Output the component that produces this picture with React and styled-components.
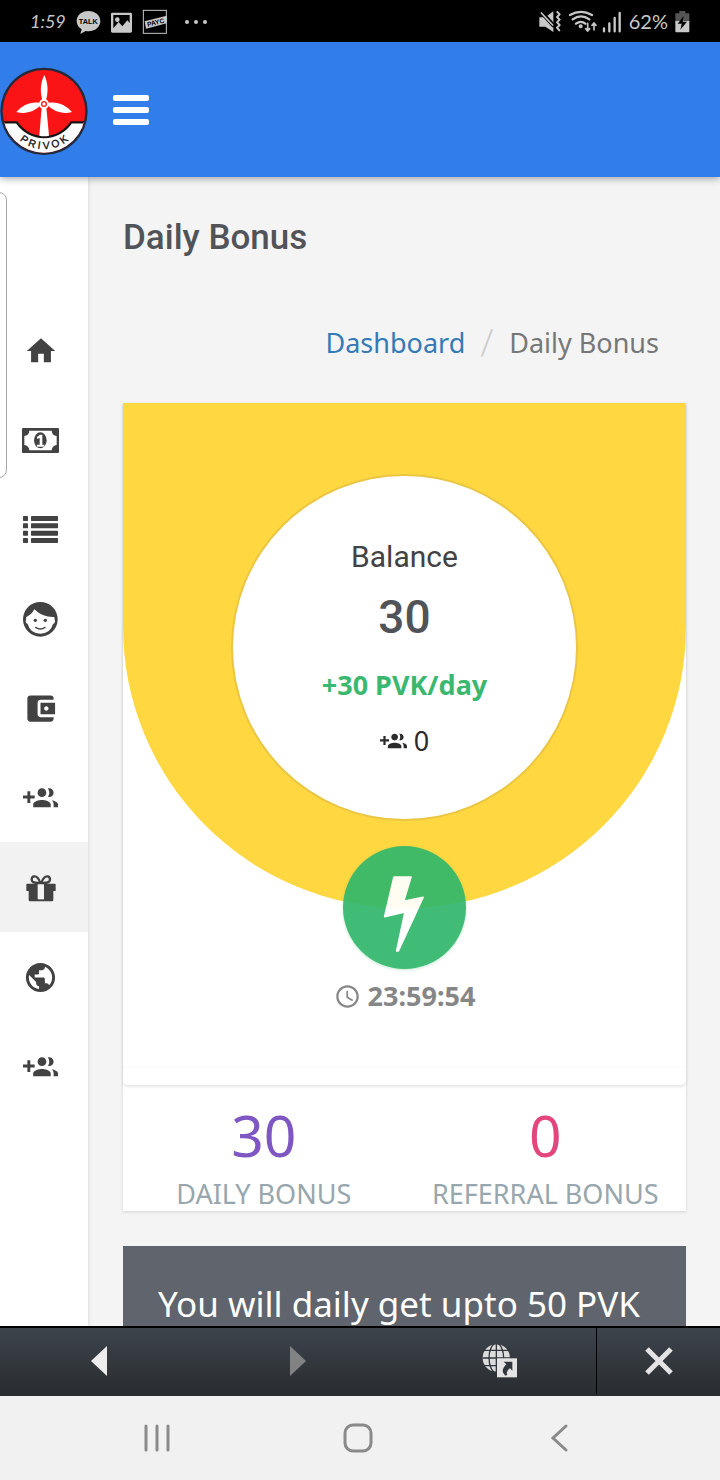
import styled, { createGlobalStyle } from "styled-components";
import { MdHome, MdPublic, MdAccessTime } from "react-icons/md";

const GlobalStyle = createGlobalStyle`
  * {
    box-sizing: border-box;
    margin: 0;
    padding: 0;
  }
  body {
    background: #f4f4f4;
    color: #424242;
    font-family: "Noto Sans", sans-serif;
    font-size: 27px;
  }
  a {
    text-decoration: none;
  }
  button {
    background: none;
    border: none;
    cursor: pointer;
    font: inherit;
  }
  svg {
    display: block;
  }
`;

const Screen = styled.div`
  display: flex;
  flex-direction: column;
  height: 100vh;
  overflow: hidden;
`;

const StatusBar = styled.div`
  display: flex;
  flex: none;
  align-items: center;
  justify-content: space-between;
  height: 42px;
  padding: 0 30px;
  background: #000;
  color: #c8c8c8;
  font-family: Lato, sans-serif;
  font-size: 20px;
`;

const StatusGroup = styled.div`
  display: flex;
  align-items: center;
  gap: ${({ $gap }) => $gap}px;
  em {
    width: 36px;
    font-size: 18px;
  }
`;

const Header = styled.header`
  display: flex;
  flex: none;
  align-items: center;
  gap: 25px;
  height: 135px;
  background: #317eeb;
  box-shadow: 0 1px 8px rgba(0, 0, 0, 0.4);
  position: relative;
  z-index: 2;
`;

const MenuButton = styled.button`
  display: flex;
  flex-direction: column;
  gap: 6px;
  width: 36px;
  span {
    height: 6px;
    border-radius: 2px;
    background: #fff;
  }
`;

const Body = styled.div`
  display: flex;
  flex: 1;
  min-height: 0;
  overflow: hidden;
  position: relative;
`;

const ScrollHandle = styled.div`
  position: absolute;
  top: 15px;
  left: -10px;
  width: 17px;
  height: 286px;
  border: 1px solid #a8a8a8;
  border-radius: 8px;
`;

const Sidebar = styled.nav`
  flex: none;
  width: 88px;
  padding-top: 128px;
  background: #fff;
  box-shadow: 0 0 4px rgba(0, 0, 0, 0.15);
  ul {
    display: grid;
    grid-auto-rows: 1fr;
    height: 806px;
    list-style: none;
  }
`;

const SideLink = styled.a`
  display: flex;
  align-items: center;
  justify-content: center;
  height: 100%;
  padding: 2px 7px 0 0;
  color: #424242;
  background: ${({ $active }) => ($active ? "#f2f2f2" : "transparent")};
`;

const Content = styled.main`
  flex: 1;
  min-width: 0;
  padding: 41px 34px 0 35px;
`;

const Title = styled.h1`
  color: #505458;
  font-family: Roboto, sans-serif;
  font-size: 35px;
  font-weight: 500;
  line-height: 40px;
`;

const Breadcrumb = styled.ol`
  display: flex;
  justify-content: flex-end;
  gap: 15px;
  margin-top: 65px;
  padding-right: 27px;
  line-height: 40px;
  color: #777;
  list-style: none;
  a {
    color: #337ab7;
  }
  li {
    display: flex;
  }
  li + li::before {
    content: "/";
    padding-right: 15px;
    color: #ccc;
    font-family: Roboto, sans-serif;
    font-size: 35px;
    font-weight: 300;
  }
`;

const Card = styled.section`
  margin-top: 40px;
  background: #fff;
  box-shadow: 0 1px 3px rgba(0, 0, 0, 0.14);
`;

const Panel = styled.div`
  display: flex;
  flex-direction: column;
  align-items: center;
  border-radius: 0 0 5px 5px;
  background: #fff;
  box-shadow: 0 2px 3px rgba(0, 0, 0, 0.1);
`;

const Hero = styled.div`
  display: flex;
  justify-content: center;
  width: 100%;
  padding: 73px 0 89px;
  border-radius: 0 0 282px 282px;
  background: #ffd740;
`;

const Circle = styled.div`
  display: flex;
  flex-direction: column;
  align-items: center;
  width: 343px;
  height: 343px;
  padding-top: 61px;
  border-radius: 50%;
  background: #fff;
  box-shadow: 0 0 0 2px rgba(80, 80, 80, 0.12);
  line-height: 40px;
`;

const BalanceLabel = styled.h2`
  font-family: Roboto, sans-serif;
  font-size: 30px;
  font-weight: 400;
`;

const Balance = styled.strong`
  margin-top: 10px;
  color: #505458;
  font-family: Roboto, sans-serif;
  font-size: 46px;
  font-weight: 500;
  line-height: 60px;
`;

const Rate = styled.strong`
  margin-top: 18px;
  color: #3bb86f;
`;

const Referrals = styled.span`
  display: flex;
  align-items: center;
  gap: 7px;
  margin-top: 16px;
  color: #2b2b2b;
`;

const ClaimButton = styled.button`
  width: 123px;
  height: 123px;
  margin-top: -62px;
  border-radius: 50%;
  background: #33b86c;
  box-shadow: 0 1px 3px rgba(51, 184, 108, 0.3);
  opacity: 0.93;
`;

const Timer = styled.div`
  display: flex;
  align-items: center;
  gap: 7px;
  margin: 7px 0 51px;
  color: #868686;
  font-weight: 700;
  line-height: 40px;
`;

const PanelFooter = styled.div`
  width: 100%;
  height: 18px;
  border-top: 1px solid #fafafa;
`;

const Stats = styled.dl`
  display: grid;
  grid-template-columns: 1fr 1fr;
  padding-top: 20px;
  text-align: center;
`;

const Stat = styled.div`
  display: flex;
  flex-direction: column-reverse;
  gap: 12px;
  dt {
    color: #98a6ad;
    line-height: 34px;
    text-transform: uppercase;
    white-space: nowrap;
  }
  dd {
    color: ${({ $color }) => $color};
    font-size: 57px;
    line-height: 60px;
  }
`;

const Notice = styled.section`
  margin-top: 35px;
  padding: 35px;
  background: #60646d;
  color: #fff;
  font-size: 35px;
  line-height: 46px;
`;

const BrowserBar = styled.div`
  display: grid;
  flex: none;
  grid-template-columns: 1fr 1fr 1fr 124px;
  height: 70px;
  padding-bottom: 2px;
  border-top: 2px solid #000;
  background: linear-gradient(#3d444c, #292c2f);
  button {
    display: flex;
    align-items: center;
    justify-content: center;
  }
  button:last-child {
    border-left: 1px solid #000;
  }
`;

const SystemBar = styled.div`
  display: grid;
  flex: none;
  grid-template-columns: 1fr 1fr 1fr;
  height: 84px;
  padding: 0 60px 0 56px;
  background: #f1f1f1;
  button {
    display: flex;
    align-items: center;
    justify-content: center;
  }
`;

const StatusNotifications = () => (
  <svg width="132" height="26" viewBox="228 24 396 78" fill="#c8c8c8">
    <path d="M265 33c-20 0-35 13-35 30 0 11 6 20 15 25l-4 14 16-9c28 4 44-12 44-30 0-17-16-30-36-30z" />
    <text x="265" y="72" fontSize="22" fontWeight="700" textAnchor="middle" fill="#000" fontFamily="Liberation Sans, sans-serif">TALK</text>
    <path fillRule="evenodd" d="M337 38h55q4 0 4 4v52q0 4-4 4h-55q-4 0-4-4V42q0-4 4-4zm3 7v40l16-19 11 13 15-18 7 8V45zm12 7a7 7 0 1 1 0 14 7 7 0 0 1 0-14z" />
    <rect x="430" y="31" width="69" height="69" fill="none" stroke="#c8c8c8" strokeWidth="3" />
    <path d="M434 64l66-17v23l-62 16z" />
    <text x="443" y="80" fontSize="20" fontWeight="700" fill="#000" fontFamily="Liberation Sans, sans-serif" transform="rotate(-13 443 80)">PAYC</text>
    <circle cx="561" cy="66" r="6" />
    <circle cx="588" cy="66" r="6" />
    <circle cx="615" cy="66" r="6" />
  </svg>
);

const StatusSignals = () => (
  <svg width="84" height="26" viewBox="54 24 252 78" fill="none" stroke="#c8c8c8" strokeWidth="6" strokeLinecap="round">
    <path d="M58 52h18l24-18v62L76 80H58z" fill="#c8c8c8" stroke="none" />
    <path d="M62 34l38 42" stroke="#000" strokeWidth="12" />
    <path d="M64 39l34 36" strokeWidth="5" />
    <path d="M112 36l7 7-8 8 8 8-8 8 8 8-8 8 7 8" strokeLinejoin="round" />
    <path d="M150 45q33-19 66 0M158 58q25-18 50 0M168 71q15-11 28 0" strokeWidth="7" />
    <circle cx="182" cy="79" r="3" fill="#c8c8c8" />
    <path d="M203 70v22m-6-6l6 7 6-7M222 90V70m-6 6l6-7 6 7" strokeWidth="5" />
    <path d="M252 85v9M268 70v24M284 54v40M299 39v55" strokeWidth="7" />
  </svg>
);

const BatteryIcon = () => (
  <svg width="15" height="26" viewBox="467 24 45 78">
    <path d="M480 33h18v7h12v26h-42V40h12z" fill="#555" />
    <path d="M468 63h42v31q0 3-3 3h-36q-3 0-3-3z" fill="#c8c8c8" />
    <path d="M493 48l-18 23h12l-4 18 20-24h-13z" fill="#000" />
  </svg>
);

const Logo = () => (
  <svg width="88" height="92" viewBox="0 192 264 276" role="img" aria-label="Privok">
    <defs>
      <clipPath id="logo-disc">
        <circle cx="132" cy="334" r="124" />
      </clipPath>
      <path id="logo-arc" d="M38 397A113 113 0 0 0 226 397" />
    </defs>
    <circle cx="132" cy="334" r="131" fill="#222b3c" />
    <g clipPath="url(#logo-disc)">
      <path d="M0 200h264v270H0z" fill="#fb1416" />
      <path d="M0 367h50q32 44 82 44t82-44h50v110H0z" fill="#fff" stroke="#151515" strokeWidth="7" />
    </g>
    <g fill="#fff">
      <path d="M125 322h14l8 85q-15 4-29 0z" />
      <path d="M128 304c-8-26-8-54 5-79 12 25 12 53 4 79z" />
      <path d="M122 316c-20 20-46 27-73 20 18-21 42-32 70-28z" />
      <path d="M143 316c20 20 46 27 73 20-18-21-42-32-70-28z" />
      <circle cx="132" cy="312" r="15" />
    </g>
    <circle cx="132" cy="312" r="7" fill="none" stroke="#fb1416" strokeWidth="4" />
    <text fontSize="31" fill="#151515" stroke="#151515" fontFamily="Liberation Sans, sans-serif" textAnchor="middle">
      <textPath href="#logo-arc" startOffset="50%">P R I V O K</textPath>
    </text>
  </svg>
);

const MoneyIcon = () => (
  <svg width="37" height="25" viewBox="0 0 111 75" fill="currentColor">
    <path fillRule="evenodd" d="M3 0h105q3 0 3 3v69q0 3-3 3H3q-3 0-3-3V3q0-3 3-3zm19 8q-1 14-15 16v27q14 2 15 16h67q1-14 15-16V24Q90 22 89 8z" />
    <ellipse cx="55" cy="37" rx="19" ry="24" />
    <path d="M53 20h8v30h6v6H45v-6h8V30q-4 2-8 2v-6q6-1 8-6z" fill="#fff" />
  </svg>
);

const ListIcon = () => (
  <svg width="35" height="27" viewBox="0 0 105 81" fill="currentColor">
    {[0, 22, 44, 66].map((y) => (
      <g key={y}>
        <rect y={y} width="15" height="15" rx="2" />
        <rect x="24" y={y} width="81" height="15" rx="2" />
      </g>
    ))}
  </svg>
);

const FaceIcon = () => (
  <svg width="35" height="35" viewBox="0 0 105 105" fill="currentColor">
    <circle cx="52" cy="52" r="52" />
    <path d="M34 22q-8 16-24 23l-2 14q2 6 6 7 8 29 38 29t38-29q5-1 6-7l-2-14q-34 2-60-23z" fill="#fff" />
    <circle cx="37" cy="55" r="5" />
    <circle cx="67" cy="55" r="5" />
    <path d="M38 76q14 10 28 0" fill="none" stroke="currentColor" strokeWidth="4" strokeLinecap="round" />
  </svg>
);

const WalletIcon = () => (
  <svg width="35" height="35" viewBox="0 0 24 24" fill="currentColor">
    <path d="M21 18v1c0 1.100-.9 2-2 2H5c-1.110 0-2-.9-2-2V5c0-1.100.89-2 2-2h14c1.100 0 2 .9 2 2v1h-9c-1.110 0-2 .9-2 2v8c0 1.100.89 2 2 2h9zm-9-2h10V8H12v8zm4-2.500c-.83 0-1.500-.67-1.500-1.500s.67-1.500 1.500-1.500 1.500.67 1.500 1.500-.67 1.500-1.500 1.500z" />
  </svg>
);

const GroupAddIcon = ({ size = 35 }) => (
  <svg width={size} height={size} viewBox="0 0 24 24" fill="currentColor">
    <path d="M8 10H5V7H3v3H0v2h3v3h2v-3h3v-2zm10 1c1.660 0 2.990-1.340 2.990-3S19.660 5 18 5c-.32 0-.63.05-.91.14.57.81.9 1.790.9 2.860s-.34 2.040-.9 2.860c.28.09.59.14.91.14zm-5 0c1.660 0 2.990-1.340 2.990-3S14.660 5 13 5c-1.660 0-3 1.340-3 3s1.340 3 3 3zm6.620 2.160c.83.73 1.380 1.660 1.380 2.840v2h3v-2c0-1.540-2.370-2.490-4.380-2.840zM13 13c-2 0-6 1-6 3v2h12v-2c0-2-4-3-6-3z" />
  </svg>
);

const GiftIcon = () => (
  <svg width="30" height="27" viewBox="0 0 90 81" fill="currentColor">
    <path d="M3 26h83q3 0 3 3v19h-7v27q0 4-4 4H12q-4 0-4-4V48H1V29q0-3 2-3z" />
    <path d="M35 27h19v46H35z" fill="#f2f2f2" />
    <path d="M43 24C39 11 32 3 24 4c-8 1-9 13-3 17 4 3 12 3 22 3zM46 24C50 11 57 3 65 4c8 1 9 13 3 17-4 3-12 3-22 3z" fill="none" stroke="currentColor" strokeWidth="7" />
  </svg>
);

const ShortcutIcon = () => (
  <svg width="42" height="34" viewBox="348 341 126 102">
    <circle cx="409" cy="383" r="41" fill="#dcdcdc" />
    <g fill="none" stroke="#31363c" strokeWidth="4">
      <path d="M409 341v84M368 383h84M370 360h78M370 406h78" />
      <ellipse cx="409" cy="383" rx="22" ry="44" />
    </g>
    <path d="M411 384h60v57h-60z" fill="#e4e4e4" />
    <path d="M431 394h26v27l-7-7q-14 9-8 19l-6 3q-17-14 3-34z" fill="#31363c" />
  </svg>
);

const links = [
  { name: "Dashboard", icon: <MdHome size={34} /> },
  { name: "Earnings", icon: <MoneyIcon /> },
  { name: "Transactions", icon: <ListIcon /> },
  { name: "Profile", icon: <FaceIcon /> },
  { name: "Wallet", icon: <WalletIcon /> },
  { name: "Referrals", icon: <GroupAddIcon /> },
  { name: "Daily Bonus", icon: <GiftIcon />, active: true },
  { name: "Website", icon: <MdPublic size={35} /> },
  { name: "Invite", icon: <GroupAddIcon /> },
];

const App = () => {
  return (
    <>
      <GlobalStyle />
      <Screen>
        <StatusBar>
          <StatusGroup $gap={10}>
            <em>1:59</em>
            <StatusNotifications />
          </StatusGroup>
          <StatusGroup $gap={7}>
            <StatusSignals />
            <span>62%</span>
            <BatteryIcon />
          </StatusGroup>
        </StatusBar>
        <Header>
          <Logo />
          <MenuButton aria-label="Menu">
            <span />
            <span />
            <span />
          </MenuButton>
        </Header>
        <Body>
          <Sidebar>
            <ul>
              {links.map(({ name, icon, active }) => (
                <li key={name}>
                  <SideLink href="#" aria-label={name} $active={active}>
                    {icon}
                  </SideLink>
                </li>
              ))}
            </ul>
          </Sidebar>
          <ScrollHandle />
          <Content>
            <Title>Daily Bonus</Title>
            <Breadcrumb>
              <li>
                <a href="#">Dashboard</a>
              </li>
              <li>Daily Bonus</li>
            </Breadcrumb>
            <Card>
              <Panel>
                <Hero>
                  <Circle>
                    <BalanceLabel>Balance</BalanceLabel>
                    <Balance>30</Balance>
                    <Rate>+30 PVK/day</Rate>
                    <Referrals>
                      <GroupAddIcon size={27} />0
                    </Referrals>
                  </Circle>
                </Hero>
                <ClaimButton aria-label="Claim bonus">
                  <svg viewBox="69 48 369 369">
                    <path
                      d="M222 141h51l-22 73 58-12-74 161h-5l25-117-61 14z"
                      fill="#fff"
                      stroke="#fff"
                      strokeWidth="5"
                      strokeLinejoin="round"
                    />
                  </svg>
                </ClaimButton>
                <Timer>
                  <MdAccessTime size={27} />
                  <span>23:59:54</span>
                </Timer>
                <PanelFooter />
              </Panel>
              <Stats>
                <Stat $color="#7e57c2">
                  <dt>Daily Bonus</dt>
                  <dd>30</dd>
                </Stat>
                <Stat $color="#e2467c">
                  <dt>Referral Bonus</dt>
                  <dd>0</dd>
                </Stat>
              </Stats>
            </Card>
            <Notice>You will daily get upto 50 PVK</Notice>
          </Content>
        </Body>
        <BrowserBar>
          <button aria-label="Back">
            <svg width="18" height="32" viewBox="0 0 18 32">
              <path d="M17 1v30L1 16z" fill="#ededed" />
            </svg>
          </button>
          <button aria-label="Forward">
            <svg width="18" height="32" viewBox="0 0 18 32">
              <path d="M1 1v30l16-15z" fill="#808284" />
            </svg>
          </button>
          <button aria-label="Open in browser">
            <ShortcutIcon />
          </button>
          <button aria-label="Close">
            <svg width="30" height="30" viewBox="0 0 30 30">
              <path d="M3 3l24 24M27 3L3 27" stroke="#e4e4e4" strokeWidth="5" />
            </svg>
          </button>
        </BrowserBar>
        <SystemBar>
          <button aria-label="Recents">
            <svg width="26" height="28" viewBox="0 0 26 28">
              <path d="M2 2v24M13 2v24M24 2v24" stroke="#8a8a8a" strokeWidth="3" strokeLinecap="round" />
            </svg>
          </button>
          <button aria-label="Home">
            <svg width="30" height="30" viewBox="0 0 30 30">
              <rect x="2" y="2" width="26" height="26" rx="8" fill="none" stroke="#8a8a8a" strokeWidth="3" />
            </svg>
          </button>
          <button aria-label="Return">
            <svg width="18" height="28" viewBox="0 0 18 28">
              <path d="M16 2L3 14l13 12" fill="none" stroke="#8a8a8a" strokeWidth="3" strokeLinecap="round" />
            </svg>
          </button>
        </SystemBar>
      </Screen>
    </>
  );
};

export default App;
